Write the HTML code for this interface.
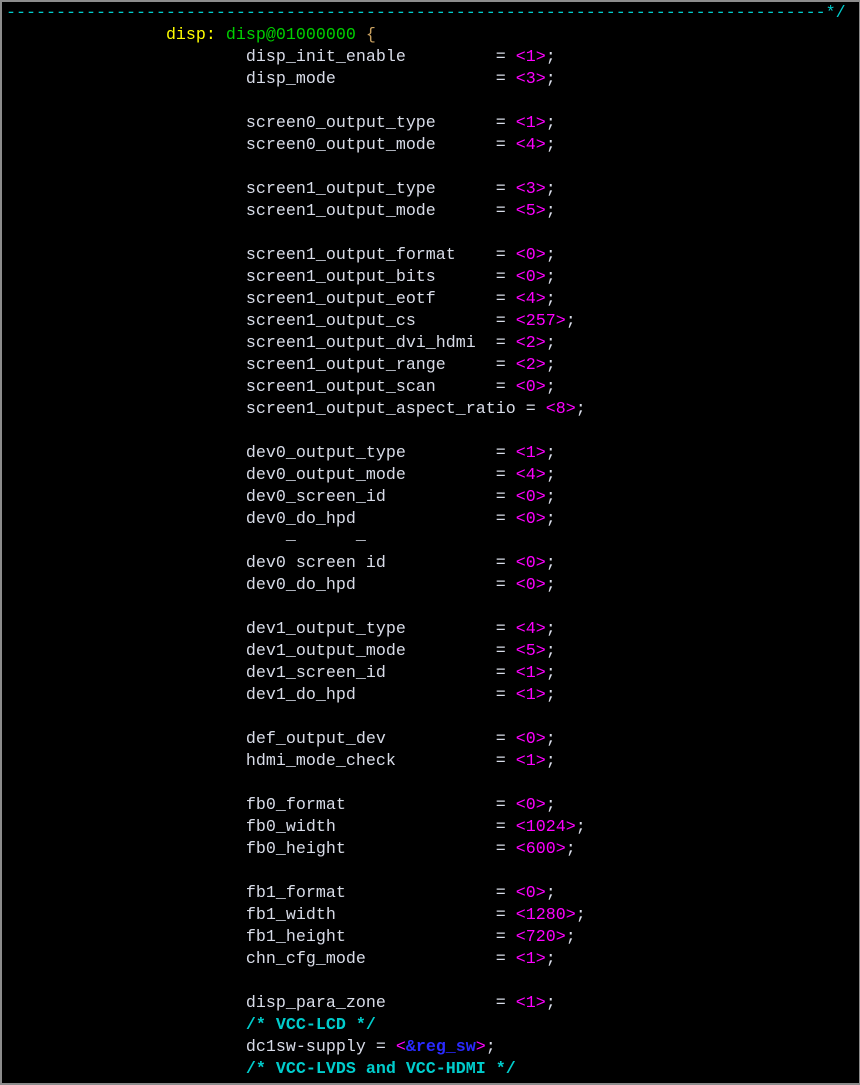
<!DOCTYPE html>
<html><head><meta charset="utf-8"><style>
html,body{margin:0;padding:0;background:#000;}
#w{position:relative;width:860px;height:1085px;box-sizing:border-box;border:2px solid #8c8c8c;border-right:1px solid #8c8c8c;background:#000;overflow:hidden;}
pre{position:absolute;left:4px;top:1px;margin:0;font-family:"Liberation Mono",monospace;font-size:16.67px;line-height:22px;color:#d8dce8;white-space:pre;}
.c{color:#00cccc;font-weight:bold}
.d{color:#00cccc}
.y{color:#ffff00}
.g{color:#00d000}
.m{color:#ff00ff}
.b{color:#2a2aff;font-weight:bold}
.u{position:relative;top:-6px}
</style></head><body><div id="w"><pre><span class="d">----------------------------------------------------------------------------------*/</span>
                <span class="y">disp:</span> <span class="g">disp@01000000</span> <span style="color:#c8a060">{</span>
                        disp_init_enable         = <span class="m">&lt;1&gt;</span>;
                        disp_mode                = <span class="m">&lt;3&gt;</span>;

                        screen0_output_type      = <span class="m">&lt;1&gt;</span>;
                        screen0_output_mode      = <span class="m">&lt;4&gt;</span>;

                        screen1_output_type      = <span class="m">&lt;3&gt;</span>;
                        screen1_output_mode      = <span class="m">&lt;5&gt;</span>;

                        screen1_output_format    = <span class="m">&lt;0&gt;</span>;
                        screen1_output_bits      = <span class="m">&lt;0&gt;</span>;
                        screen1_output_eotf      = <span class="m">&lt;4&gt;</span>;
                        screen1_output_cs        = <span class="m">&lt;257&gt;</span>;
                        screen1_output_dvi_hdmi  = <span class="m">&lt;2&gt;</span>;
                        screen1_output_range     = <span class="m">&lt;2&gt;</span>;
                        screen1_output_scan      = <span class="m">&lt;0&gt;</span>;
                        screen1_output_aspect_ratio = <span class="m">&lt;8&gt;</span>;

                        dev0_output_type         = <span class="m">&lt;1&gt;</span>;
                        dev0_output_mode         = <span class="m">&lt;4&gt;</span>;
                        dev0_screen_id           = <span class="m">&lt;0&gt;</span>;
                        dev0_do_hpd              = <span class="m">&lt;0&gt;</span>;
<span class="u">                            _      _</span>
                        dev0 screen id           = <span class="m">&lt;0&gt;</span>;
                        dev0_do_hpd              = <span class="m">&lt;0&gt;</span>;

                        dev1_output_type         = <span class="m">&lt;4&gt;</span>;
                        dev1_output_mode         = <span class="m">&lt;5&gt;</span>;
                        dev1_screen_id           = <span class="m">&lt;1&gt;</span>;
                        dev1_do_hpd              = <span class="m">&lt;1&gt;</span>;

                        def_output_dev           = <span class="m">&lt;0&gt;</span>;
                        hdmi_mode_check          = <span class="m">&lt;1&gt;</span>;

                        fb0_format               = <span class="m">&lt;0&gt;</span>;
                        fb0_width                = <span class="m">&lt;1024&gt;</span>;
                        fb0_height               = <span class="m">&lt;600&gt;</span>;

                        fb1_format               = <span class="m">&lt;0&gt;</span>;
                        fb1_width                = <span class="m">&lt;1280&gt;</span>;
                        fb1_height               = <span class="m">&lt;720&gt;</span>;
                        chn_cfg_mode             = <span class="m">&lt;1&gt;</span>;

                        disp_para_zone           = <span class="m">&lt;1&gt;</span>;
                        <span class="c">/* VCC-LCD */</span>
                        dc1sw-supply = <span class="m">&lt;</span><span class="b">&amp;reg_sw</span><span class="m">&gt;</span>;
                        <span class="c">/* VCC-LVDS and VCC-HDMI */</span>
</pre></div></body></html>
